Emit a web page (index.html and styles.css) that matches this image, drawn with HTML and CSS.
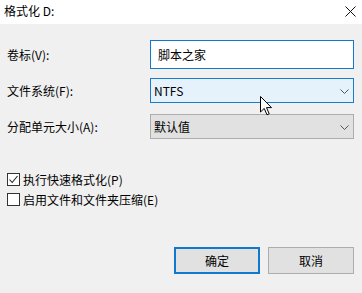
FILE: index.html
```html
<!DOCTYPE html>
<html>
<head>
<meta charset="utf-8">
<link rel="stylesheet" href="styles.css">
</head>
<body>
<div class="window">
  <div class="titlebar">
    <span class="title">格式化 D:</span>
    <svg class="close" width="11" height="11" viewBox="0 0 11 11"><path d="M0.5 0.5 L10.5 10.5 M10.5 0.5 L0.5 10.5" stroke="#111" stroke-width="1" fill="none"/></svg>
  </div>
  <div class="content">
    <div class="row row1">
      <label class="lbl">卷标(V):</label>
      <div class="field textbox">脚本之家</div>
    </div>
    <div class="row row2">
      <label class="lbl">文件系统(F):</label>
      <div class="field combo hot"><span>NTFS</span><svg class="chev" width="9" height="5" viewBox="0 0 9 5"><path d="M0.5 0.5 L4.5 4.5 L8.5 0.5" stroke="#555" fill="none"/></svg></div>
    </div>
    <div class="row row3">
      <label class="lbl">分配单元大小(A):</label>
      <div class="field combo dis"><span>默认值</span><svg class="chev" width="9" height="5" viewBox="0 0 9 5"><path d="M0.5 0.5 L4.5 4.5 L8.5 0.5" stroke="#555" fill="none"/></svg></div>
    </div>
    <div class="checks">
      <div class="check"><span class="box"><svg width="11" height="11" viewBox="0 0 11 11"><path d="M1.5 5.5 L4.2 8.5 L9.5 2" stroke="#222" stroke-width="1.1" fill="none"/></svg></span><span>执行快速格式化(P)</span></div>
      <div class="check"><span class="box"></span><span>启用文件和文件夹压缩(E)</span></div>
    </div>
    <div class="buttons">
      <div class="btn default">确定</div>
      <div class="btn">取消</div>
    </div>
  </div>
  <svg class="cursor" width="13" height="20" viewBox="0 0 13 20"><path d="M0.5 0.5 L0.5 16 L4.2 12.4 L7 18.8 L9.2 17.8 L6.5 11.6 L11.5 11.6 Z" fill="#fff" stroke="#000" stroke-width="1" stroke-linejoin="miter"/></svg>
</div>
</body>
</html>
```
FILE: styles.css
```css
html, body {
  margin: 0;
  padding: 0;
}
body {
  width: 362px;
  height: 293px;
  overflow: hidden;
  background: #f0f0f0;
  font-family: "Noto Sans CJK SC", "Liberation Sans", sans-serif;
  font-size: 12px;
  color: #000;
}
.window {
  position: relative;
  width: 362px;
  height: 293px;
}
.titlebar {
  height: 24px;
  background: #fff;
  display: flex;
  align-items: center;
  justify-content: space-between;
  padding: 0 6px 0 4px;
  box-sizing: border-box;
}
.title {
  font-size: 12px;
  line-height: 24px;
  margin-top: -2px;
}
.close {
  margin-top: -2px;
}
.content {
  padding: 16px 8px 0 7px;
  display: flex;
  flex-direction: column;
}
.row {
  display: flex;
  align-items: center;
}
.row1 { height: 29px; margin-bottom: 9px; }
.row2 { height: 25px; margin-bottom: 11px; }
.row3 { height: 25px; }
.lbl {
  width: 143px;
  flex: none;
}
.field {
  width: 204px;
  height: 100%;
  box-sizing: border-box;
  display: flex;
  align-items: center;
}
.textbox {
  background: #fff;
  border: 1px solid #0f78cf;
  padding-left: 7px;
}
.combo {
  justify-content: space-between;
  padding: 0 4px 0 3px;
}
.combo.hot {
  background: #e5f1fb;
  border: 1px solid #1a7bc9;
}
.combo.dis {
  background: #e1e1e1;
  border: 1px solid #adadad;
}
.chev {
  margin-top: 1px;
}
.checks {
  margin-top: 34px;
  display: flex;
  flex-direction: column;
  gap: 7px;
}
.check {
  display: flex;
  align-items: center;
  height: 13px;
  gap: 3px;
}
.box {
  width: 13px;
  height: 13px;
  box-sizing: border-box;
  border: 1px solid #333;
  background: #fff;
  display: flex;
  align-items: center;
  justify-content: center;
}
.buttons {
  margin-top: 41px;
  display: flex;
  justify-content: flex-end;
  gap: 8px;
}
.btn {
  width: 86px;
  height: 27px;
  box-sizing: border-box;
  background: #e1e1e1;
  border: 1px solid #adadad;
  display: flex;
  align-items: center;
  justify-content: center;
}
.btn.default {
  border: 2px solid #0f78cf;
}
.cursor {
  position: absolute;
  left: 260px;
  top: 96px;
}
```
